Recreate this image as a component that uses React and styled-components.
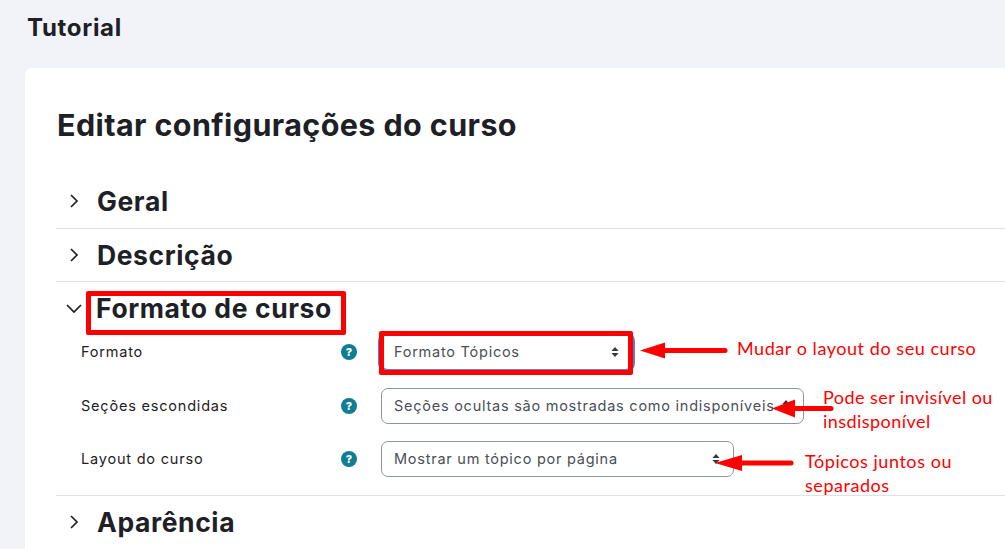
import React from "react";
import styled, { createGlobalStyle } from "styled-components";

const Global = createGlobalStyle`
  html, body { margin: 0; padding: 0; background: #f1f3f8; }
  * { box-sizing: border-box; }
`;

const Page = styled.div`
  position: relative;
  width: 1005px;
  height: 549px;
  overflow: hidden;
  background: #f1f3f8;
  font-family: Inter, "Liberation Sans", sans-serif;
  color: #1d2125;
`;

const PageTitle = styled.h2`
  margin: 0;
  height: 68px;
  padding: 13px 0 0 27px;
  font-size: 24px;
  line-height: 30px;
  font-weight: 700;
  letter-spacing: 0.7px;
`;

const Card = styled.main`
  width: 1010px;
  margin-left: 25px;
  padding: 0 30px 0 31px;
  height: 500px;
  background: #fff;
  border-radius: 7px;
`;

const Heading = styled.h1`
  margin: 0;
  height: 107px;
  padding: 39px 0 0 1px;
  font-size: 30.5px;
  line-height: 36px;
  font-weight: 700;
  letter-spacing: 0.4px;
`;

const Section = styled.section`
  border-bottom: 1px solid #dee2e6;
  padding-bottom: ${(p) => (p.$open ? "18px" : "0")};
`;

const SectionHead = styled.div`
  display: flex;
  align-items: center;
  height: ${(p) => (p.$open ? "52px" : "52.5px")};
  padding-left: 13px;
  gap: 18px;
`;

const Chevron = styled.svg`
  width: 10px;
  height: 14px;
  flex: none;
  overflow: visible;
  fill: none;
  stroke: #1d2125;
  stroke-width: 1.7;
`;

const SectionTitle = styled.h3`
  margin: 0;
  font-size: 26.5px;
  line-height: 32px;
  font-weight: 700;
  letter-spacing: 0.6px;
  margin-left: ${(p) => (p.$open ? "-1px" : "0")};
`;

const Fields = styled.div`
  display: grid;
  grid-auto-rows: 36px;
  row-gap: 17.5px;
`;

const Field = styled.div`
  display: grid;
  grid-template-columns: 260px 40px auto;
  align-items: center;
  padding-left: 25px;
`;

const Label = styled.label`
  padding-bottom: 1px;
  font-size: 14.5px;
  letter-spacing: 0.8px;
  color: #1d2125;
`;

const Help = styled.span`
  display: flex;
  align-items: center;
  justify-content: center;
  width: 16px;
  height: 16px;
  border-radius: 50%;
  background: #0f7d92;
  color: #fff;
  font-size: 11px;
  line-height: 16px;
  font-weight: 800;
`;

const Select = styled.div`
  display: flex;
  align-items: center;
  justify-content: space-between;
  width: ${(p) => p.$width}px;
  height: 36px;
  padding: 0 ${(p) => (p.$focus ? "12px" : "13px")} 1px 12px;
  border: 1px solid ${(p) => (p.$focus ? "#5b7fd0" : "#8f959e")};
  box-shadow: ${(p) => (p.$focus ? "0 0 0 3px #5b7fd0" : "none")};
  border-radius: 7px;
  background: #fff;
  color: #495057;
  font-size: 14.5px;
  letter-spacing: 0.75px;
  white-space: nowrap;
`;

const Caret = styled.svg`
  width: 8px;
  height: 10px;
  flex: none;
  fill: #343a40;
`;

const RedBox = styled.div`
  position: absolute;
  left: ${(p) => p.$x}px;
  top: ${(p) => p.$y}px;
  width: ${(p) => p.$w}px;
  height: ${(p) => p.$h}px;
  border: 5px solid #f00;
  border-radius: 2px;
`;

const Arrows = styled.svg`
  position: absolute;
  left: 0;
  top: 0;
  width: 1005px;
  height: 549px;
  pointer-events: none;
`;

const Note = styled.div`
  position: absolute;
  left: ${(p) => p.$x}px;
  top: ${(p) => p.$y}px;
  font-family: Lato, "Open Sans", sans-serif;
  font-size: 18px;
  line-height: 24px;
  letter-spacing: ${(p) => p.$spacing};
  color: #f00;
  white-space: pre;
`;

const Right = () => (
  <Chevron viewBox="0 0 10 14"><path d="M2 1l6 6-6 6" /></Chevron>
);
const Down = () => (
  <Chevron viewBox="0 0 10 14"><path d="M-2 4l7 7 7-7" /></Chevron>
);
const UpDown = () => (
  <Caret viewBox="0 0 8 10"><path d="M4 0l3.6 4H.4zM4 10L.4 6h7.2z" /></Caret>
);

const Arrow = ({ tip, base, end, y, half }) => (
  <g>
    <path d={`M${tip} ${y}L${base} ${y - half}V${y + half}Z`} fill="#f00" />
    <path d={`M${base} ${y}H${end}`} stroke="#f00" strokeWidth="5" strokeLinecap="round" />
  </g>
);

export default function App() {
  return (
    <Page>
      <Global />
      <PageTitle>Tutorial</PageTitle>
      <Card>
        <Heading>Editar configurações do curso</Heading>
        <Section>
          <SectionHead><Right /><SectionTitle>Geral</SectionTitle></SectionHead>
        </Section>
        <Section>
          <SectionHead><Right /><SectionTitle>Descrição</SectionTitle></SectionHead>
        </Section>
        <Section $open>
          <SectionHead $open><Down /><SectionTitle $open>Formato de curso</SectionTitle></SectionHead>
          <Fields>
            <Field>
              <Label>Formato</Label>
              <Help>?</Help>
              <Select $width={251} $focus>Formato Tópicos<UpDown /></Select>
            </Field>
            <Field>
              <Label>Seções escondidas</Label>
              <Help>?</Help>
              <Select $width={423}>Seções ocultas são mostradas como indisponíveis<UpDown /></Select>
            </Field>
            <Field>
              <Label>Layout do curso</Label>
              <Help>?</Help>
              <Select $width={353}>Mostrar um tópico por página<UpDown /></Select>
            </Field>
          </Fields>
        </Section>
        <Section>
          <SectionHead><Right /><SectionTitle>Aparência</SectionTitle></SectionHead>
        </Section>
      </Card>
      <RedBox $x={86} $y={291} $w={260} $h={44} />
      <RedBox $x={379} $y={331} $w={254} $h={44} />
      <Arrows viewBox="0 0 1005 549">
        <Arrow tip={640} base={665} end={725} y={350.5} half={8} />
        <Arrow tip={772} base={795} end={831} y={408.5} half={9} />
        <Arrow tip={715} base={742} end={791} y={463} half={8} />
      </Arrows>
      <Note $x={737} $y={336} $spacing="0.55px">Mudar o layout do seu curso</Note>
      <Note $x={823} $y={385} $spacing="0.45px">{"Pode ser invisível ou\ninsdisponível"}</Note>
      <Note $x={805} $y={449} $spacing="0.55px">{"Tópicos juntos ou\nseparados"}</Note>
    </Page>
  );
}
